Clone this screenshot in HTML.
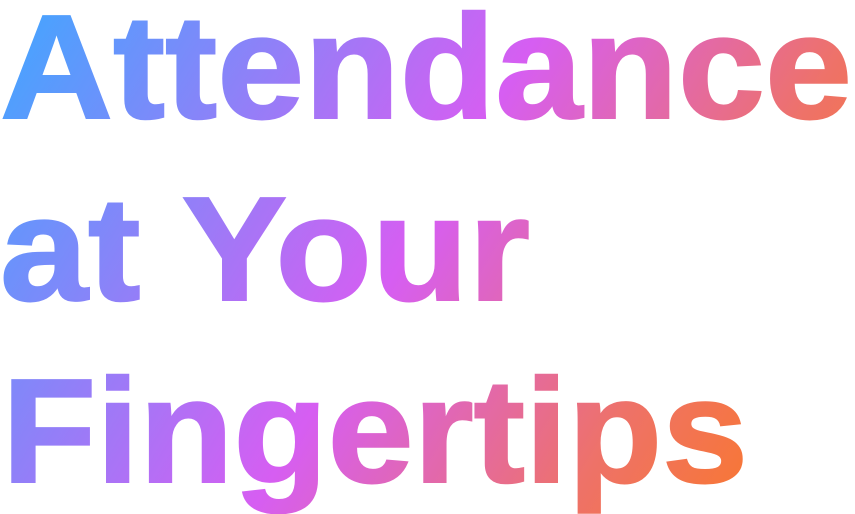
<!DOCTYPE html>
<html><head><meta charset="utf-8"><style>
html,body{margin:0;padding:0;background:#fff;width:855px;height:514px;overflow:hidden}
svg{display:block}
text{font-family:"Liberation Sans","DejaVu Sans",sans-serif;font-weight:bold;font-size:148px}
</style></head><body>
<svg width="855" height="514" viewBox="0 0 855 514" xmlns="http://www.w3.org/2000/svg">
<defs>
<linearGradient id="g" gradientUnits="userSpaceOnUse" x1="0" y1="0" x2="855" y2="514">
<stop offset="0" stop-color="#3ea8ff"/>
<stop offset="0.48" stop-color="#d65ef2"/>
<stop offset="0.75" stop-color="#ee7268"/>
<stop offset="1" stop-color="#ff7a10"/>
</linearGradient>
</defs>
<g fill="url(#g)" stroke="url(#g)" stroke-width="2">
<text x="0" y="118" textLength="852" lengthAdjust="spacingAndGlyphs">Attendance</text>
<text x="0" y="300" textLength="530" lengthAdjust="spacingAndGlyphs">at Your</text>
<text x="2" y="482" textLength="746" lengthAdjust="spacingAndGlyphs">Fingertips</text>
</g>
</svg>
</body></html>
